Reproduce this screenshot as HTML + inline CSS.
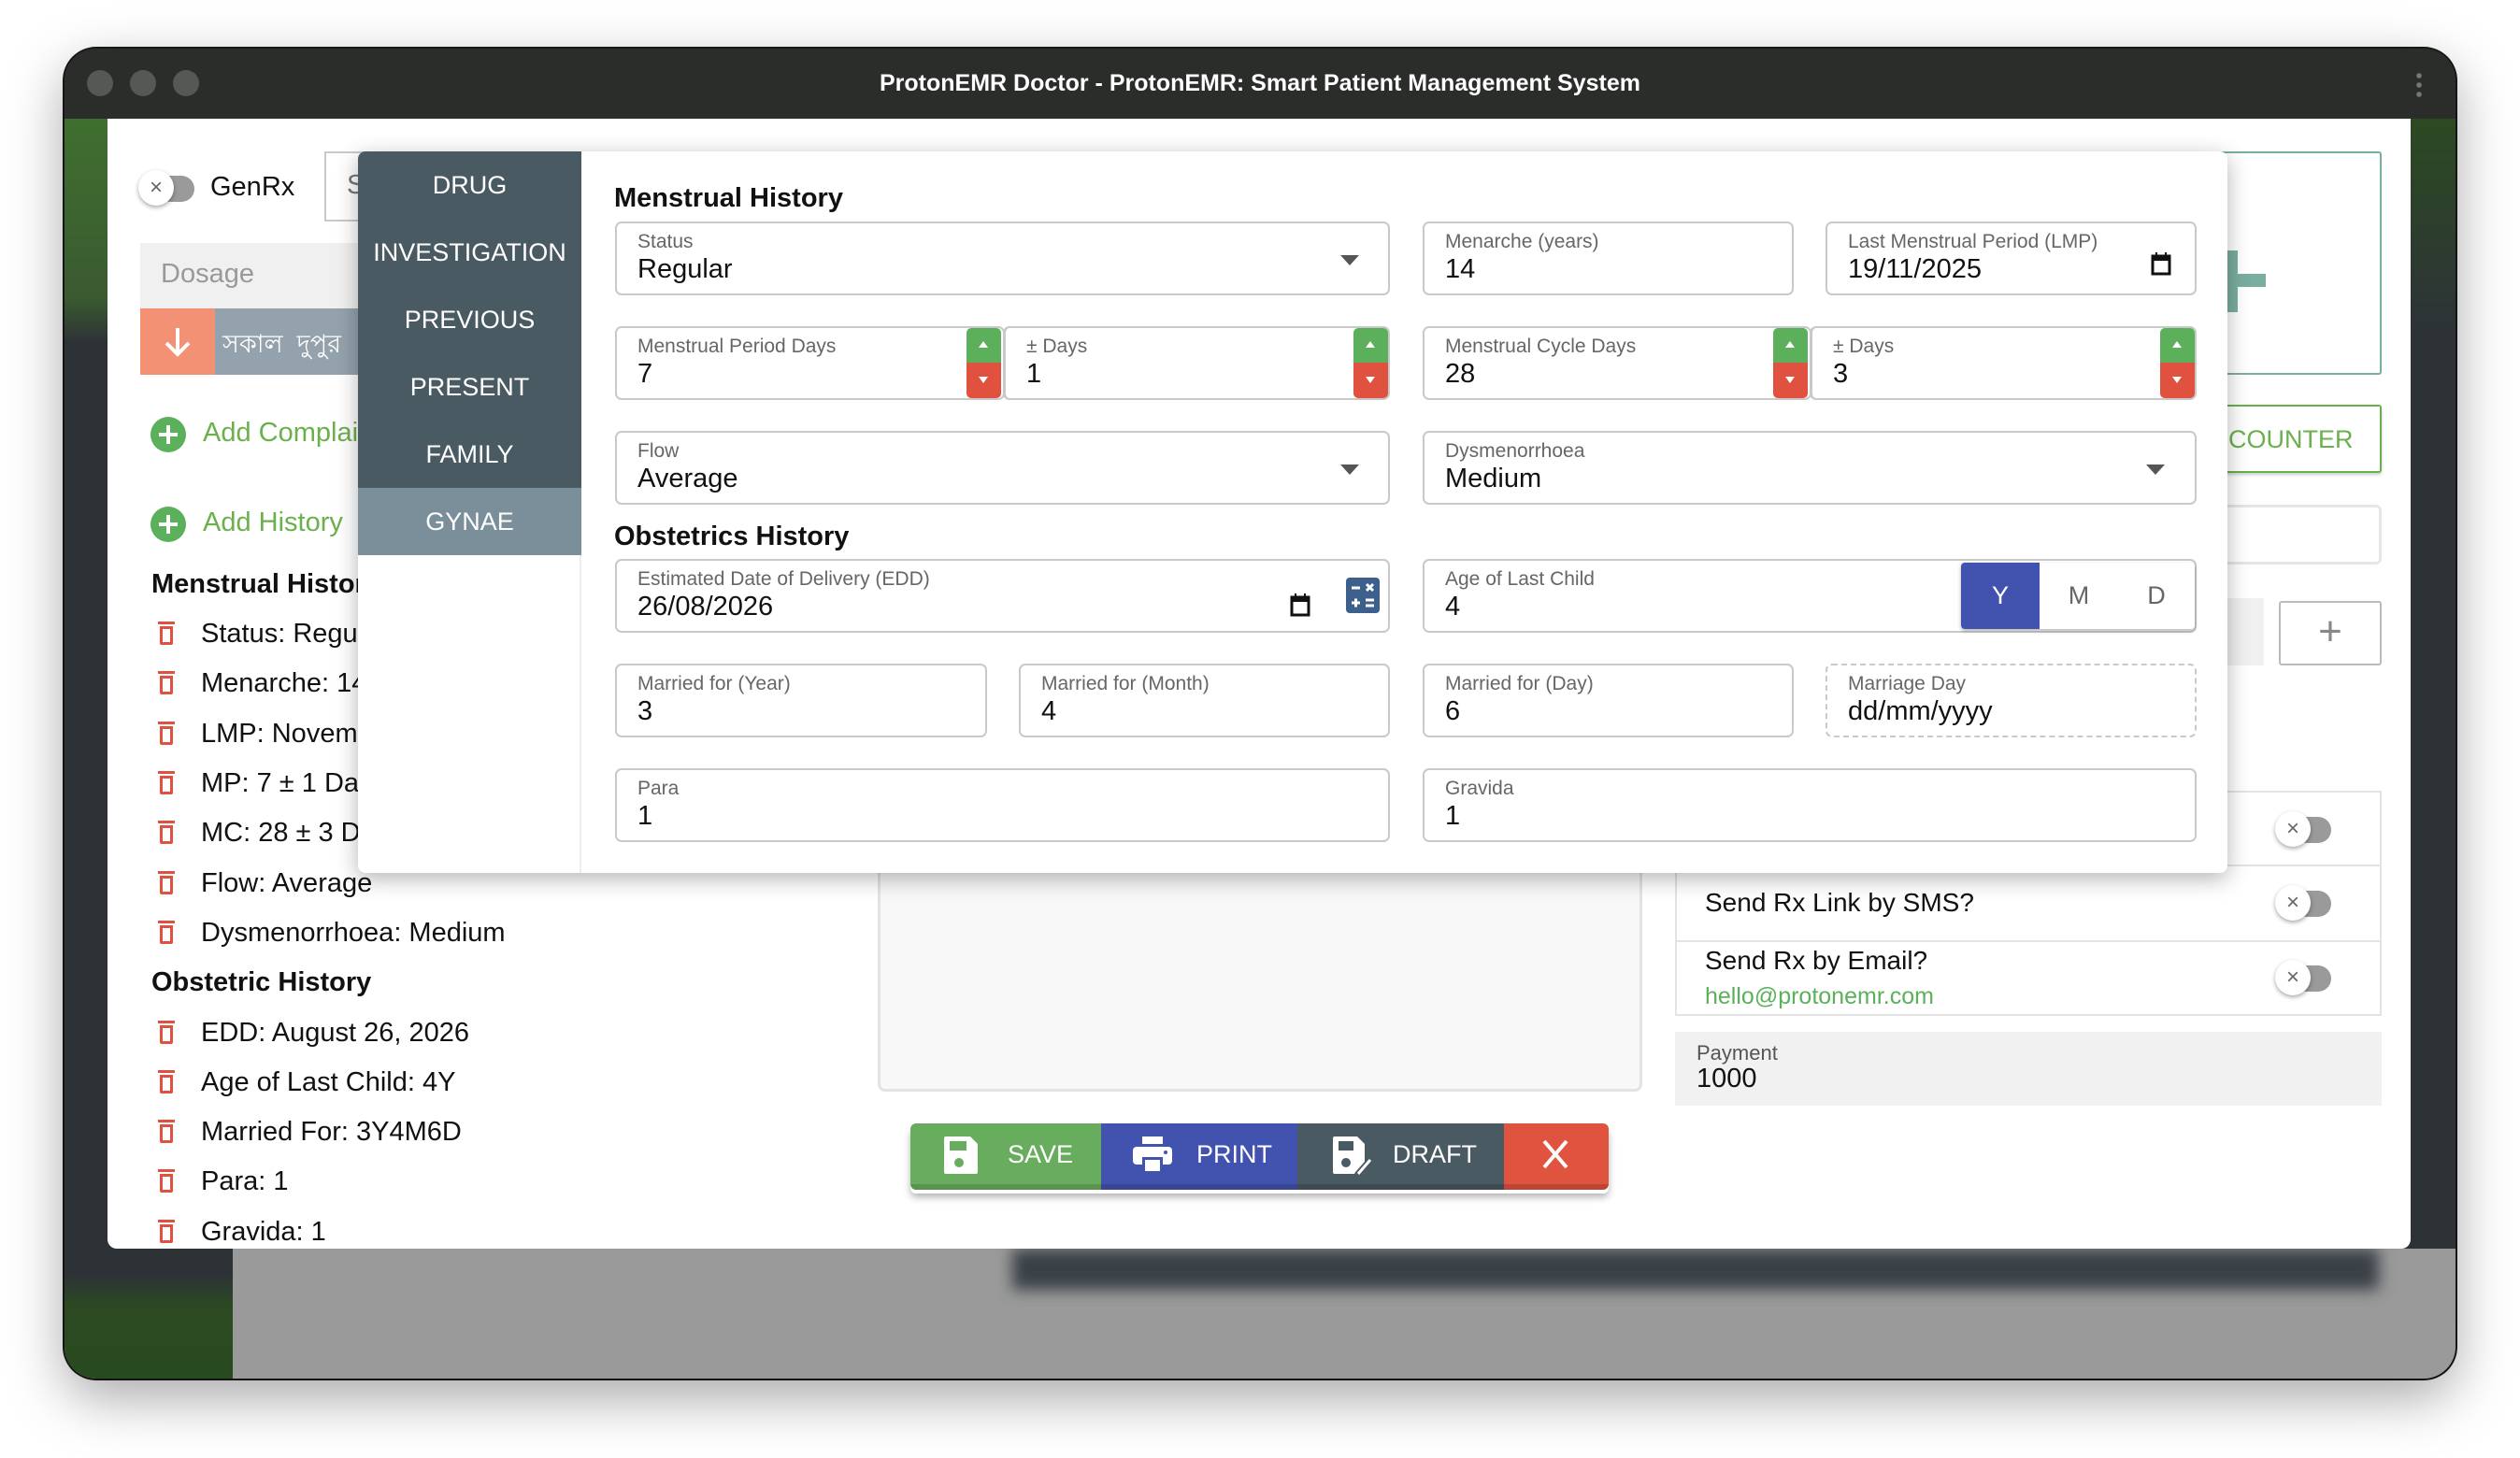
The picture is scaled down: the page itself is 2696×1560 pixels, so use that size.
<!DOCTYPE html>
<html><head><meta charset="utf-8">
<style>
*{box-sizing:border-box;margin:0;padding:0}
body{width:2696px;height:1560px;background:#fff;font-family:"Liberation Sans",sans-serif;position:relative;overflow:hidden;color:#111}
.a{position:absolute}
.win{left:69px;top:52px;width:2558px;height:1423px;border-radius:34px;background:#2d3237;overflow:hidden;box-shadow:0 20px 60px rgba(0,0,0,.35),0 0 0 2px #1a1a1a}
.title{left:0;top:0;width:2558px;height:75px;background:#2b2d2b;color:#fff;font-size:25px;text-align:center;line-height:75px;font-weight:600}
.dot{width:28px;height:28px;border-radius:50%;background:#555855;top:75px}
.panel{left:115px;top:127px;width:2464px;height:1209px;background:#fff;border-radius:0 0 10px 10px}
.f{position:absolute;border:2px solid #c9c9c9;border-radius:7px;background:#fff;height:79px}
.f .l{position:absolute;left:22px;top:8px;font-size:21px;color:#666}
.f .v{position:absolute;left:22px;top:33px;font-size:29px;color:#111}
.arr{position:absolute;width:0;height:0;border-left:10px solid transparent;border-right:10px solid transparent;border-top:11px solid #555;top:34px}
.sp{position:absolute;top:0;width:37px;height:75px}
.sp .u{height:37px;background:#5cb05c;border-radius:5px 5px 0 0;position:relative}
.sp .d{height:38px;background:#e0513f;border-radius:0 0 5px 5px;position:relative}
.sp .u:after{content:"";position:absolute;left:13px;top:14px;border-left:5px solid transparent;border-right:5px solid transparent;border-bottom:7px solid #fff}
.sp .d:after{content:"";position:absolute;left:13px;top:15px;border-left:5px solid transparent;border-right:5px solid transparent;border-top:7px solid #fff}
.nav{position:absolute;left:0;width:239px;height:72px;line-height:72px;color:#fff;font-size:27px;text-align:center}
.li{position:absolute;left:215px;font-size:29px;color:#111;white-space:nowrap}
.tr{position:absolute;left:171px;width:14px;height:20px;border:3px solid #e0513f;border-top-width:3px;border-radius:0 0 2px 2px}
.tr:before{content:"";position:absolute;left:-5px;top:-8px;width:18px;height:3px;background:#e0513f}
.tg{position:absolute;width:58px;height:30px}
.tg .t{position:absolute;left:18px;top:2px;width:40px;height:28px;border-radius:14px;background:#9a9a9a}
.tg .k{position:absolute;left:-2px;top:-4px;width:38px;height:38px;border-radius:50%;background:#fff;box-shadow:0 2px 5px rgba(0,0,0,.35);text-align:center;line-height:37px;color:#666;font-size:24px}
.btn{position:absolute;top:1202px;height:71px;color:#fff;font-size:27px;line-height:66px}
</style></head><body>
<div class="a win">
  <div class="a title">ProtonEMR Doctor - ProtonEMR: Smart Patient Management System</div>
  <div class="a dot" style="left:24px;top:23px"></div>
  <div class="a dot" style="left:70px;top:23px"></div>
  <div class="a dot" style="left:116px;top:23px"></div>
  <div class="a" style="right:36px;top:24px;width:6px;height:28px;background:radial-gradient(circle,#777 2.5px,transparent 3px) 0 0/6px 10px repeat-y"></div>
  <div class="a" style="left:0;top:75px;width:46px;height:240px;background:linear-gradient(#3f6f2f,#3a5a30 80%,#2d3237)"></div>
  <div class="a" style="left:0;top:1284px;width:2558px;height:139px;background:#9a9a9a"></div>
  <div class="a" style="left:0;top:1284px;width:180px;height:139px;background:linear-gradient(#2d3237 20%,#2c4a22 45%,#284a1f)"></div>
  <div class="a" style="left:1014px;top:1284px;width:1462px;height:44px;background:#3a4146;filter:blur(8px)"></div>
  <div class="a" style="left:2510px;top:75px;width:48px;height:230px;background:linear-gradient(#2c4a22,#2d3237)"></div>
</div>

<div class="a panel">
</div>
<!-- left column -->
<div class="tg" style="left:150px;top:186px"><div class="t"></div><div class="k">×</div></div>
<div class="a" style="left:225px;top:184px;font-size:29px">GenRx</div>
<div class="a" style="left:347px;top:162px;width:60px;height:75px;border:2px solid #c9c9c9;font-size:29px;color:#777;padding:18px 0 0 22px">S</div>
<div class="a" style="left:150px;top:260px;width:250px;height:70px;background:#f0f0f0;font-size:29px;color:#999;padding:17px 0 0 22px">Dosage</div>
<div class="a" style="left:150px;top:330px;width:80px;height:71px;background:#f29173"></div>
<svg class="a" style="left:172px;top:348px" width="36" height="36" viewBox="0 0 36 36"><path d="M18 3v28M6 19l12 12 12-12" stroke="#fff" stroke-width="4" fill="none"/></svg>
<div class="a" style="left:230px;top:330px;width:170px;height:71px;background:#94a2ad;color:#fff;font-size:27px;padding:18px 0 0 8px;font-family:'Liberation Sans','Noto Sans CJK SC',sans-serif;white-space:nowrap">সকাল &nbsp;দুপুর</div>
<svg class="a" style="left:160px;top:445px" width="40" height="40"><circle cx="20" cy="20" r="19" fill="#5cb05c"/><path d="M20 10v20M10 20h20" stroke="#fff" stroke-width="4"/></svg>
<div class="a" style="left:217px;top:447px;font-size:29px;color:#6ab04c;white-space:nowrap">Add Complaint</div>
<svg class="a" style="left:160px;top:541px" width="40" height="40"><circle cx="20" cy="20" r="19" fill="#5cb05c"/><path d="M20 10v20M10 20h20" stroke="#fff" stroke-width="4"/></svg>
<div class="a" style="left:217px;top:543px;font-size:29px;color:#6ab04c">Add History</div>
<div class="a" style="left:162px;top:609px;font-size:29px;font-weight:bold">Menstrual History</div>
<div class="tr" style="top:670px"></div><div class="li" style="top:662px">Status: Regular</div>
<div class="tr" style="top:723px"></div><div class="li" style="top:715px">Menarche: 14</div>
<div class="tr" style="top:777px"></div><div class="li" style="top:769px">LMP: November 19, 2025</div>
<div class="tr" style="top:830px"></div><div class="li" style="top:822px">MP: 7 ± 1 Days</div>
<div class="tr" style="top:883px"></div><div class="li" style="top:875px">MC: 28 ± 3 Days</div>
<div class="tr" style="top:937px"></div><div class="li" style="top:929px">Flow: Average</div>
<div class="tr" style="top:990px"></div><div class="li" style="top:982px">Dysmenorrhoea: Medium</div>
<div class="a" style="left:162px;top:1035px;font-size:29px;font-weight:bold">Obstetric History</div>
<div class="tr" style="top:1097px"></div><div class="li" style="top:1089px">EDD: August 26, 2026</div>
<div class="tr" style="top:1150px"></div><div class="li" style="top:1142px">Age of Last Child: 4Y</div>
<div class="tr" style="top:1203px"></div><div class="li" style="top:1195px">Married For: 3Y4M6D</div>
<div class="tr" style="top:1256px"></div><div class="li" style="top:1248px">Para: 1</div>
<div class="a" style="left:115px;top:1300px;width:600px;height:36px;overflow:hidden"><div class="tr" style="top:10px;left:56px"></div><div class="li" style="top:2px;left:100px">Gravida: 1</div></div>

<!-- right behind -->
<div class="a" style="left:2170px;top:162px;width:378px;height:239px;border:2px solid #7aaea0;border-radius:3px"></div>
<div class="a" style="left:2380px;top:268px;width:44px;height:66px;background:linear-gradient(90deg,#7aaea0 0 14px,transparent 14px)"></div>
<div class="a" style="left:2380px;top:293px;width:44px;height:14px;background:#7aaea0"></div>
<div class="a" style="left:2360px;top:433px;width:188px;height:73px;border:2px solid #6ab04c;border-radius:3px;color:#6ab04c;font-size:27px;padding:20px 0 0 22px;box-shadow:0 2px 3px rgba(0,0,0,.2)">COUNTER</div>
<div class="a" style="left:2360px;top:540px;width:188px;height:64px;border:3px solid #e6e6e6;border-radius:6px"></div>
<div class="a" style="left:2360px;top:640px;width:62px;height:72px;background:#f0f0f0"></div>
<div class="a" style="left:2438px;top:643px;width:110px;height:69px;border:2px solid #bbb;border-radius:3px;text-align:center;font-size:44px;color:#888;line-height:62px">+</div>

<div class="a" style="left:1792px;top:846px;width:756px;height:241px;border:2px solid #e3e3e3"></div>
<div class="a" style="left:1792px;top:925px;width:756px;height:2px;background:#e3e3e3"></div>
<div class="a" style="left:1792px;top:1006px;width:756px;height:2px;background:#e3e3e3"></div>
<div class="tg" style="left:2436px;top:872px"><div class="t"></div><div class="k">×</div></div>
<div class="tg" style="left:2436px;top:951px"><div class="t"></div><div class="k">×</div></div>
<div class="tg" style="left:2436px;top:1031px"><div class="t"></div><div class="k">×</div></div>
<div class="a" style="left:1824px;top:950px;font-size:28px">Send Rx Link by SMS?</div>
<div class="a" style="left:1824px;top:1012px;font-size:28px">Send Rx by Email?</div>
<div class="a" style="left:1824px;top:1052px;font-size:25px;color:#5cb05c">hello@protonemr.com</div>
<div class="a" style="left:1792px;top:1104px;width:756px;height:79px;background:#f1f1f1"></div>
<div class="a" style="left:1815px;top:1114px;font-size:22px;color:#555">Payment</div>
<div class="a" style="left:1815px;top:1138px;font-size:29px">1000</div>

<div class="a" style="left:939px;top:900px;width:818px;height:268px;background:#f8f8f8;border:3px solid #e3e3e3;border-top:none;border-radius:0 0 8px 8px"></div>

<!-- buttons -->
<div class="a" style="left:974px;top:1206px;width:747px;height:71px;border-radius:6px;box-shadow:0 4px 8px rgba(0,0,0,.3)"></div>
<div class="btn" style="left:974px;width:204px;background:#68ad5e;border-bottom:6px solid #5a934f;border-radius:6px 0 0 6px">
 <svg class="a" style="left:36px;top:14px" width="36" height="40" viewBox="0 0 36 40"><path d="M2 0h26l8 8v30a2 2 0 0 1-2 2H2a2 2 0 0 1-2-2V2a2 2 0 0 1 2-2z" fill="#fff"/><rect x="6" y="5" width="18" height="10" fill="#68ad5e"/><circle cx="16" cy="28" r="5" fill="#68ad5e"/></svg>
 <span class="a" style="left:104px">SAVE</span></div>
<div class="btn" style="left:1178px;width:210px;background:#4252af;border-bottom:6px solid #384694">
 <svg class="a" style="left:34px;top:14px" width="42" height="40" viewBox="0 0 42 40"><rect x="10" y="0" width="22" height="8" fill="#fff"/><rect x="0" y="11" width="42" height="19" rx="4" fill="#fff"/><rect x="10" y="22" width="22" height="18" fill="#4252af"/><rect x="13" y="25" width="16" height="12" fill="#fff"/><circle cx="35" cy="17" r="2" fill="#4252af"/></svg>
 <span class="a" style="left:102px">PRINT</span></div>
<div class="btn" style="left:1388px;width:221px;background:#4a5a63;border-bottom:6px solid #3e4b53">
 <svg class="a" style="left:38px;top:14px" width="46" height="44" viewBox="0 0 46 44"><path d="M2 0h24l8 8v30a2 2 0 0 1-2 2H2a2 2 0 0 1-2-2V2a2 2 0 0 1 2-2z" fill="#fff"/><rect x="6" y="5" width="16" height="10" fill="#4a5a63"/><circle cx="14" cy="28" r="5" fill="#4a5a63"/><path d="M26 42l14-16" stroke="#4a5a63" stroke-width="8"/><path d="M27 40l13-15" stroke="#fff" stroke-width="3"/></svg>
 <span class="a" style="left:102px">DRAFT</span></div>
<div class="btn" style="left:1609px;width:112px;background:#e0533f;border-bottom:6px solid #bd4535;border-radius:0 6px 6px 0">
 <svg class="a" style="left:40px;top:17px" width="30" height="32"><path d="M3 2l24 28M27 2L3 30" stroke="#fff" stroke-width="4"/></svg></div>

<!-- modal -->
<div class="a" style="left:383px;top:162px;width:2000px;height:772px;background:#fff;border-radius:8px;box-shadow:0 6px 24px rgba(0,0,0,.3);overflow:hidden">
 <div class="a" style="left:0;top:0;width:239px;height:772px;border-right:2px solid #eee"></div>
 <div class="a" style="left:0;top:0;width:239px;height:432px;background:#4a5a63"></div>
 <div class="nav" style="top:0">DRUG</div>
 <div class="nav" style="top:72px">INVESTIGATION</div>
 <div class="nav" style="top:144px">PREVIOUS</div>
 <div class="nav" style="top:216px">PRESENT</div>
 <div class="nav" style="top:288px">FAMILY</div>
 <div class="nav" style="top:360px;background:#7b8f9a">GYNAE</div>
</div>
<div class="a" style="left:657px;top:196px;font-size:29px;font-weight:bold">Menstrual History</div>
<div class="f" style="left:658px;top:237px;width:829px"><div class="l">Status</div><div class="v">Regular</div><div class="arr" style="left:774px"></div></div>
<div class="f" style="left:1522px;top:237px;width:397px"><div class="l">Menarche (years)</div><div class="v">14</div></div>
<div class="f" style="left:1953px;top:237px;width:397px"><div class="l">Last Menstrual Period (LMP)</div><div class="v">19/11/2025</div>
 <svg class="a" style="left:346px;top:30px" width="22" height="26"><rect x="2" y="5" width="18" height="19" fill="none" stroke="#111" stroke-width="3"/><rect x="2" y="5" width="18" height="5" fill="#111"/><path d="M6 1v5M16 1v5" stroke="#111" stroke-width="2"/></svg></div>

<div class="f" style="left:658px;top:349px;width:417px"><div class="l">Menstrual Period Days</div><div class="v">7</div><div class="sp" style="left:374px"><div class="u"></div><div class="d"></div></div></div>
<div class="f" style="left:1073px;top:349px;width:414px;border-left-width:3px"><div class="l">± Days</div><div class="v">1</div><div class="sp" style="left:372px"><div class="u"></div><div class="d"></div></div></div>
<div class="f" style="left:1522px;top:349px;width:416px"><div class="l">Menstrual Cycle Days</div><div class="v">28</div><div class="sp" style="left:373px"><div class="u"></div><div class="d"></div></div></div>
<div class="f" style="left:1936px;top:349px;width:414px;border-left-width:3px"><div class="l">± Days</div><div class="v">3</div><div class="sp" style="left:372px"><div class="u"></div><div class="d"></div></div></div>

<div class="f" style="left:658px;top:461px;width:829px"><div class="l">Flow</div><div class="v">Average</div><div class="arr" style="left:774px"></div></div>
<div class="f" style="left:1522px;top:461px;width:828px"><div class="l">Dysmenorrhoea</div><div class="v">Medium</div><div class="arr" style="left:772px"></div></div>

<div class="a" style="left:657px;top:558px;font-size:29px;font-weight:bold">Obstetrics History</div>
<div class="f" style="left:658px;top:598px;width:829px"><div class="l">Estimated Date of Delivery (EDD)</div><div class="v">26/08/2026</div>
 <svg class="a" style="left:720px;top:34px" width="22" height="26"><rect x="2" y="5" width="18" height="19" fill="none" stroke="#111" stroke-width="3"/><rect x="2" y="5" width="18" height="5" fill="#111"/><path d="M6 1v5M16 1v5" stroke="#111" stroke-width="2"/></svg>
 <svg class="a" style="left:780px;top:18px" width="36" height="38" viewBox="0 0 36 38"><rect width="36" height="38" rx="4" fill="#3d5f8c"/><path d="M6 11h9M22 7l7 7M29 7l-7 7M6 27h9M10.5 22.5v9M21 24h9M21 30h9" stroke="#fff" stroke-width="3"/></svg></div>
<div class="f" style="left:1522px;top:598px;width:828px"><div class="l">Age of Last Child</div><div class="v">4</div>
 <div class="a" style="left:574px;top:2px;width:250px;height:71px;box-shadow:0 2px 4px rgba(0,0,0,.3);background:#fff;border-radius:4px;overflow:hidden;font-size:27px;color:#666">
  <div class="a" style="left:0;top:0;width:84px;height:71px;background:#4252af;color:#fff;text-align:center;line-height:71px">Y</div>
  <div class="a" style="left:84px;top:0;width:84px;text-align:center;line-height:71px">M</div>
  <div class="a" style="left:168px;top:0;width:82px;text-align:center;line-height:71px">D</div>
 </div></div>

<div class="f" style="left:658px;top:710px;width:398px"><div class="l">Married for (Year)</div><div class="v">3</div></div>
<div class="f" style="left:1090px;top:710px;width:397px"><div class="l">Married for (Month)</div><div class="v">4</div></div>
<div class="f" style="left:1522px;top:710px;width:397px"><div class="l">Married for (Day)</div><div class="v">6</div></div>
<div class="f" style="left:1953px;top:710px;width:397px;border-style:dashed"><div class="l">Marriage Day</div><div class="v">dd/mm/yyyy</div></div>

<div class="f" style="left:658px;top:822px;width:829px"><div class="l">Para</div><div class="v">1</div></div>
<div class="f" style="left:1522px;top:822px;width:828px"><div class="l">Gravida</div><div class="v">1</div></div>
</body></html>
